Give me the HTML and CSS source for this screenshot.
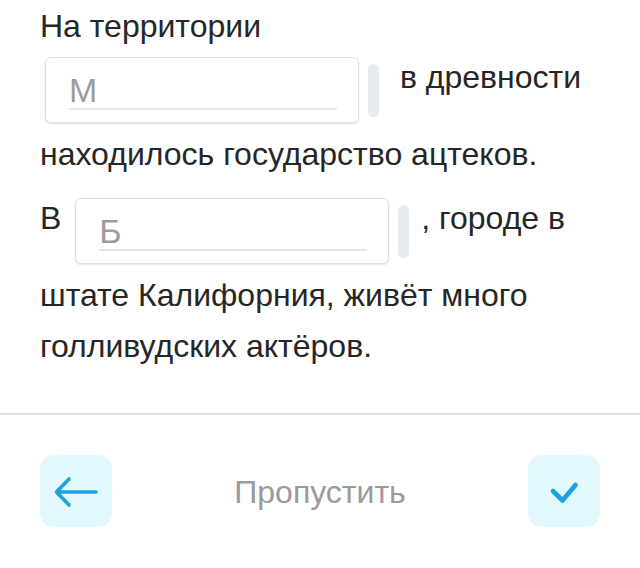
FILE: index.html
```html
<!DOCTYPE html>
<html lang="ru">
<head>
<meta charset="utf-8">
<title>Упражнение</title>
<link rel="stylesheet" href="styles.css">
</head>
<body>
<main class="exercise">
  <p class="sentence">На территории <span class="gap"><span class="field"><span class="ph">М</span></span><span class="pill"></span></span> в древности находилось государство ацтеков.</p>
  <p class="sentence second">В <span class="gap"><span class="field"><span class="ph">Б</span></span><span class="pill"></span></span>, городе в штате Калифорния, живёт много голливудских актёров.</p>
</main>
<footer class="actions">
  <button class="square" type="button" aria-label="Назад">
    <svg width="72" height="72" viewBox="0 0 72 72"><path d="M56 37H17M29 24L16.5 37L29 50" fill="none" stroke="#1ba2e3" stroke-width="3.6" stroke-linecap="round" stroke-linejoin="round"/></svg>
  </button>
  <span class="skip">Пропустить</span>
  <button class="square" type="button" aria-label="Проверить">
    <svg width="72" height="72" viewBox="0 0 72 72"><path d="M25 36L34.5 45.5L47.5 30" fill="none" stroke="#1ba2e3" stroke-width="4.6" stroke-linecap="round" stroke-linejoin="round"/></svg>
  </button>
</footer>
</body>
</html>
```
FILE: styles.css
```css
html, body {
  margin: 0;
  padding: 0;
  background: #ffffff;
}
body {
  font-family: "Liberation Sans", Arial, sans-serif;
  color: #262626;
}
.exercise {
  padding: 1px 40px 0 40px;
  height: 413px;
  box-sizing: border-box;
}
.sentence {
  margin: 0;
  font-size: 32px;
  line-height: 51px;
}
.sentence.second {
  margin-top: 13px;
}
.gap {
  display: inline-flex;
  align-items: center;
  vertical-align: top;
  margin: 5px 12px 6px 5px;
}
.field {
  display: block;
  width: 314px;
  height: 66px;
  box-sizing: border-box;
  border: 1px solid #e0e0e0;
  border-radius: 6px;
  box-shadow: 0 1px 2px rgba(0, 0, 0, 0.12);
  background: #fff;
  padding: 14px 21px 0 23px;
}
.ph {
  display: block;
  font-size: 34px;
  line-height: 36px;
  color: #9c9c9c;
  border-bottom: 2px solid #e6e6e6;
}
.pill {
  display: block;
  width: 11px;
  height: 53px;
  margin-left: 9px;
  border-radius: 6px;
  background: #e8ebee;
}
.actions {
  border-top: 2px solid #dddddd;
  padding: 40px 40px 0 40px;
  display: flex;
  justify-content: space-between;
  align-items: center;
}
.square {
  width: 72px;
  height: 72px;
  padding: 0;
  border: none;
  border-radius: 14px;
  background: #e3f8fc;
  display: flex;
  align-items: center;
  justify-content: center;
}
.square svg {
  display: block;
}
.skip {
  font-size: 32px;
  color: #9a9a9a;
  padding-top: 2px;
}
```
